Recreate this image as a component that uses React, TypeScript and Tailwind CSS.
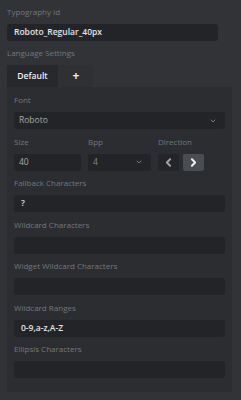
import { ChevronDown, ChevronLeft, ChevronRight } from 'lucide-react';

const Label = ({ children }: { children: string }) => (
  <div className="h-[12px] text-[8px] leading-[12px] text-[#74787e]">{children}</div>
);

const TextBox = ({ value, className = '' }: { value?: string; className?: string }) => (
  <div
    className={`mt-[6px] flex h-[17px] items-center rounded-[3px] bg-[#222427] px-[7px] text-[8.5px] font-semibold text-[#e4e5e7] ${className}`}>
    {value}
  </div>
);

const Field = ({ label, value }: { label: string; value?: string }) => (
  <div className="mt-[6.5px] flex flex-col">
    <Label>{label}</Label>
    <TextBox value={value} />
  </div>
);

export default function App() {
  return (
    <div
      className="h-[400px] w-[241px] overflow-hidden bg-[#313337] px-[7px] pt-[6px]"
      style={{ fontFamily: '"Open Sans", "DejaVu Sans", sans-serif' }}>
      <Label>Typography Id</Label>
      <TextBox value="Roboto_Regular_40px" className="w-[211px]" />
      <div className="mt-[6px]">
        <Label>Language Settings</Label>
      </div>
      <div className="mt-[6px] flex h-[22px] w-[225px] gap-[1px]">
        <div className="flex w-[51px] items-center justify-center bg-[#26282b] text-[8.5px] font-semibold text-[#eeeff0]">
          Default
        </div>
        <div className="flex w-[34px] items-center justify-center bg-[#2e3034] text-[12px] font-bold text-[#eeeff0]">
          +
        </div>
      </div>
      <div className="w-[225px] bg-[#2b2d31] px-[7px] pb-[14px] pt-[7px]">
        <Label>Font</Label>
        <div className="mt-[6px] flex h-[17px] items-center justify-between rounded-[3px] bg-[#222427] pl-[5px] pr-[8px] text-[8.5px] text-[#a9abae]">
          <span>Roboto</span>
          <ChevronDown size={8} strokeWidth={2.5} className="text-[#8c8f93]" />
        </div>
        <div className="mt-[6.5px] flex gap-[7px]">
          <div className="flex w-[67px] flex-col">
            <Label>Size</Label>
            <div className="mt-[6px] flex h-[17px] items-center rounded-[3px] bg-[#222427] px-[5px] text-[8.5px] text-[#a9abae]">
              40
            </div>
          </div>
          <div className="flex w-[63px] flex-col">
            <Label>Bpp</Label>
            <div className="mt-[6px] flex h-[17px] items-center justify-between rounded-[3px] bg-[#222427] pl-[5px] pr-[8px] text-[8.5px] text-[#85888c]">
              <span>4</span>
              <ChevronDown size={8} strokeWidth={2.5} className="text-[#85888c]" />
            </div>
          </div>
          <div className="flex flex-col">
            <Label>Direction</Label>
            <div className="mt-[6px] flex h-[17px] gap-[4px]">
              <div className="flex w-[21px] items-center justify-center rounded-[2px] bg-[#232528] text-[#a0a3a7]">
                <ChevronLeft size={13} strokeWidth={3.5} />
              </div>
              <div className="flex w-[21px] items-center justify-center rounded-[2px] bg-[#4a4d52] text-[#f2f2f3]">
                <ChevronRight size={13} strokeWidth={3.5} />
              </div>
            </div>
          </div>
        </div>
        <Field label="Fallback Characters" value="?" />
        <Field label="Wildcard Characters" />
        <Field label="Widget Wildcard Characters" />
        <Field label="Wildcard Ranges" value="0-9,a-z,A-Z" />
        <Field label="Ellipsis Characters" />
      </div>
    </div>
  );
}
